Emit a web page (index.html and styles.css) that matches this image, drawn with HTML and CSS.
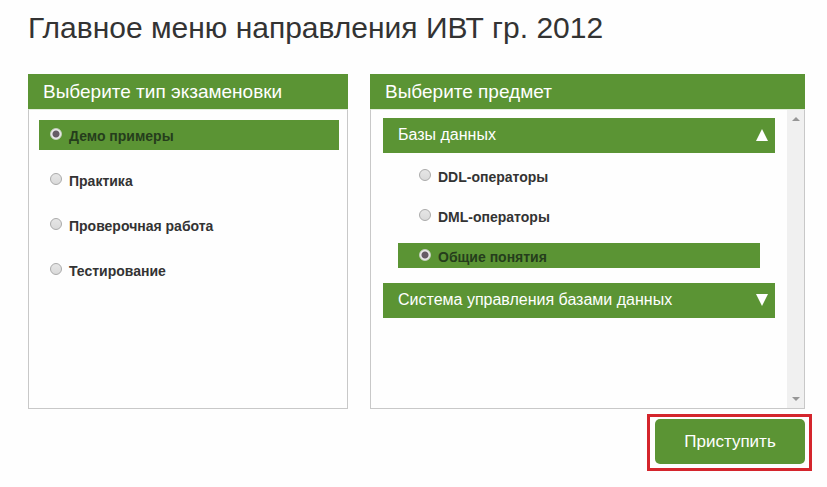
FILE: index.html
```html
<!DOCTYPE html>
<html lang="ru">
<head>
  <meta charset="utf-8">
  <meta name="viewport" content="width=device-width, initial-scale=1">
  <title>Главное меню</title>
  <link rel="stylesheet" href="styles.css">
</head>
<body>
  <main class="page">
    <h1 class="title">Главное меню направления ИВТ гр. 2012</h1>
    <form class="form">
      <div class="panels">
        <section class="panel">
          <h2 class="panel-title">Выберите тип экзаменовки</h2>
          <div class="panel-body">
            <div class="types">
              <label class="option option-active"><input class="radio" type="radio" name="type" checked><span>Демо примеры</span></label>
              <label class="option"><input class="radio" type="radio" name="type"><span>Практика</span></label>
              <label class="option"><input class="radio" type="radio" name="type"><span>Проверочная работа</span></label>
              <label class="option"><input class="radio" type="radio" name="type"><span>Тестирование</span></label>
            </div>
          </div>
        </section>
        <section class="panel">
          <h2 class="panel-title">Выберите предмет</h2>
          <div class="panel-body">
            <div class="subjects">
              <button class="group" type="button" aria-expanded="true">
                <span>Базы данных</span>
                <svg class="arrow" viewBox="0 0 12 12" aria-hidden="true"><path d="M6 0L12 12H0Z"/></svg>
              </button>
              <div class="topics">
                <label class="option topic"><input class="radio" type="radio" name="topic"><span>DDL-операторы</span></label>
                <label class="option topic"><input class="radio" type="radio" name="topic"><span>DML-операторы</span></label>
                <label class="option topic option-active"><input class="radio" type="radio" name="topic" checked><span>Общие понятия</span></label>
              </div>
              <button class="group" type="button" aria-expanded="false">
                <span>Система управления базами данных</span>
                <svg class="arrow" viewBox="0 0 12 12" aria-hidden="true"><path d="M0 0H12L6 12Z"/></svg>
              </button>
            </div>
            <div class="scrollbar" aria-hidden="true">
              <svg class="scroll-arrow" viewBox="0 0 8 4"><path d="M4 0L8 4H0Z"/></svg>
              <svg class="scroll-arrow" viewBox="0 0 8 4"><path d="M0 0H8L4 4Z"/></svg>
            </div>
          </div>
        </section>
      </div>
      <div class="actions">
        <div class="highlight">
          <button class="start" type="submit">Приступить</button>
        </div>
      </div>
    </form>
  </main>
</body>
</html>
```
FILE: styles.css
```css
* {
  box-sizing: border-box;
}

body {
  margin: 0;
  background: #fefefe;
  color: #333;
  font-family: "Liberation Sans", Arial, sans-serif;
}

.page {
  padding: 10px 22px 16px 28px;
}

.title {
  margin: 0 0 28px;
  font-size: 30px;
  line-height: 36px;
  font-weight: 400;
}

.panels {
  display: grid;
  grid-template-columns: 320fr 435fr;
  gap: 22px;
}

.panel {
  display: flex;
  flex-direction: column;
}

.panel-title {
  margin: 0;
  padding: 0 15px;
  background: #5b9434;
  color: #fff;
  font-size: 19px;
  line-height: 35px;
  font-weight: 400;
}

.panel-body {
  display: flex;
  flex: 1;
  min-height: 300px;
  border: 1px solid #c8c8c8;
  border-top-color: #e4eedd;
}

.types {
  display: flex;
  flex: 1;
  flex-direction: column;
  gap: 15px;
  padding: 10px 8px 10px 10px;
}

.option {
  display: flex;
  align-items: center;
  gap: 7px;
  height: 30px;
  padding: 0 11px;
  font-size: 14px;
  line-height: 20px;
  font-weight: 700;
}

.option span {
  padding-top: 2px;
}

.option-active {
  background: #5b9434;
  color: #253d1c;
}

.radio {
  appearance: none;
  width: 12px;
  height: 12px;
  margin: 0 0 2px;
  border: 1px solid #aaa;
  border-radius: 50%;
  background: linear-gradient(#e6e6e6, #dadada);
}

.radio:checked {
  border-color: #c6d0c0;
  background: radial-gradient(circle, #665c66 0 3px, #ececec 4px);
}

.subjects {
  flex: 1;
  padding: 8px 12px;
}

.group {
  display: flex;
  align-items: center;
  justify-content: space-between;
  width: 100%;
  height: 35px;
  padding: 0 7px 2px 15px;
  border: 0;
  background: #5b9434;
  color: #fff;
  font: inherit;
  font-size: 16px;
  text-align: left;
}

.arrow {
  width: 12px;
  height: 12px;
  fill: #fff;
}

.topics {
  display: flex;
  flex-direction: column;
  gap: 15px;
  padding: 10px 15px 15px;
}

.topic {
  height: 25px;
  padding: 0 21px;
}

.scrollbar {
  display: flex;
  flex-direction: column;
  align-items: center;
  justify-content: space-between;
  width: 17px;
  padding: 7px 0;
  background: #f0f0f0;
}

.scroll-arrow {
  width: 8px;
  height: 4px;
  fill: #969696;
}

.actions {
  display: flex;
  justify-content: flex-end;
  margin: 5px -7px 0 0;
}

.highlight {
  padding: 2px 4px 4px 5px;
  border: 3px solid #d4252c;
}

.start {
  display: block;
  min-width: 150px;
  height: 45px;
  border: 0;
  border-radius: 5px;
  background: #5b9434;
  color: #fff;
  font: inherit;
  font-size: 17px;
}
```
